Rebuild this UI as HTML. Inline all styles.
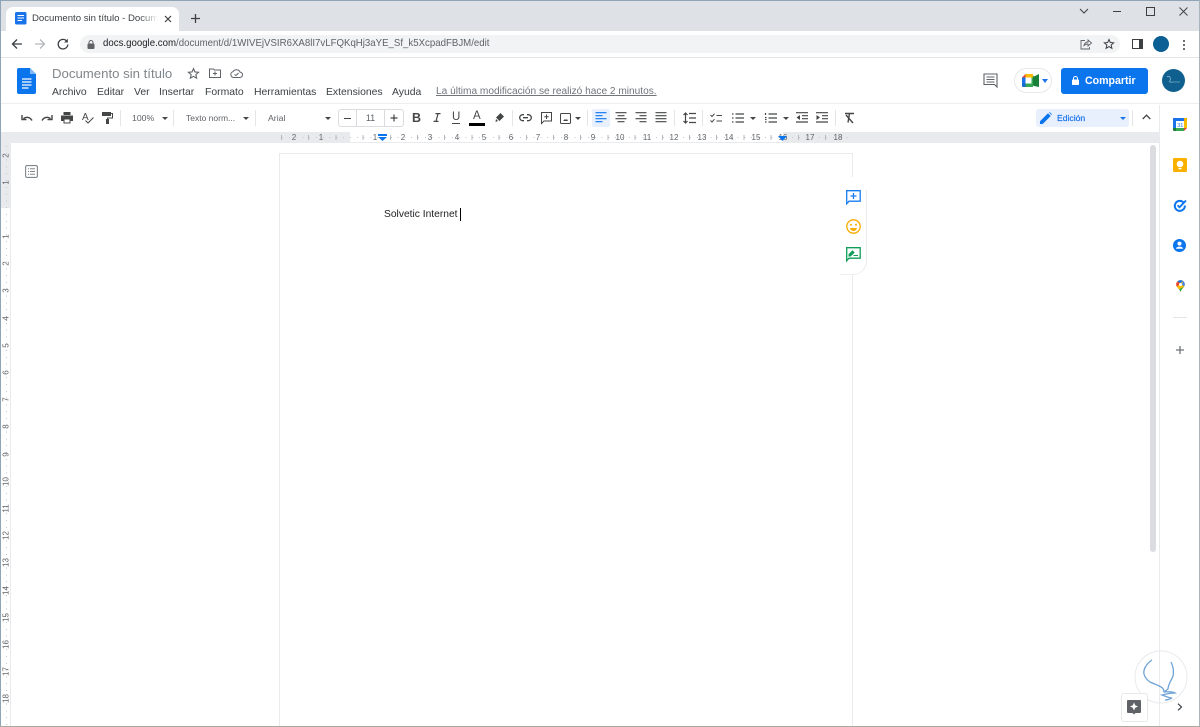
<!DOCTYPE html>
<html lang="es"><head><meta charset="utf-8"><title>Documento sin título - Documentos de Google</title>
<style>
html,body{margin:0;padding:0;width:1200px;height:727px;overflow:hidden;background:#fff;font-family:"Liberation Sans",sans-serif;color:#3c4043}
.a{position:absolute}
.t{position:absolute;white-space:nowrap;line-height:14px}
svg{position:absolute;overflow:visible}
.m{position:absolute;top:86px;font-size:10.4px;line-height:14px;color:#3c4043;white-space:nowrap}
.tb{position:absolute;top:112px;font-size:8.7px;line-height:12px;color:#5f6368;white-space:nowrap}
.sep{position:absolute;top:110px;width:1px;height:16px;background:#e3e5e8}
.r{position:absolute;top:133px;font-size:8px;line-height:9px;color:#5f6368;width:14px;text-align:center}
.v{position:absolute;left:-1px;font-size:8px;line-height:9px;height:9px;width:14px;text-align:center;color:#5f6368;transform:rotate(-90deg)}
.dots{position:absolute;top:137px;left:282px;width:568px;height:1px;background:repeating-linear-gradient(90deg,#c4c7cb 0 1px,transparent 1px 6.8px)}
.ticks{position:absolute;top:135px;left:280.6px;width:570px;height:5px;background:repeating-linear-gradient(90deg,#b5b9bd 0 1px,transparent 1px 27.2px)}
.vd{position:absolute;left:6px;top:146px;width:1px;height:581px;background:repeating-linear-gradient(180deg,#c4c7cb 0 1px,transparent 1px 6.8px)}
</style></head><body>

<!-- tab strip -->
<div class="a" style="left:0;top:0;width:1200px;height:31px;background:#dee1e6"></div>
<div class="a" style="left:6px;top:7px;width:173px;height:24px;background:#fff;border-radius:7px 7px 0 0"></div>
<svg style="left:15px;top:12px" width="12" height="13" viewBox="0 0 12 13"><rect width="11.5" height="12.5" rx="1.5" fill="#1a73e8"/><path d="M2.5 3.5h6.5M2.5 6h6.5M2.5 8.5h4.5" stroke="#fff" stroke-width="1.1"/></svg>
<div class="t" style="left:32px;top:12px;font-size:9.6px;color:#3c4043;width:126px;overflow:hidden">Documento sin título - Documen</div>
<div class="a" style="left:140px;top:12px;width:18px;height:14px;background:linear-gradient(90deg,rgba(255,255,255,0),#fff)"></div>
<svg style="left:164px;top:15px" width="8" height="8" viewBox="0 0 8 8"><path d="M1 1l6 6M7 1L1 7" stroke="#3c4043" stroke-width="1.2"/></svg>
<svg style="left:191px;top:14px" width="9" height="9" viewBox="0 0 9 9"><path d="M4.500 0v9M0 4.500h9" stroke="#3c4043" stroke-width="1.300"/></svg>
<svg style="left:1079px;top:8px" width="10" height="6" viewBox="0 0 10 6"><path d="M1 1l4 4 4-4" stroke="#3c4043" fill="none"/></svg>
<div class="a" style="left:1113px;top:10.500px;width:8px;height:1px;background:#3c4043"></div>
<div class="a" style="left:1146px;top:7px;width:7px;height:7px;border:1px solid #3c4043"></div>
<svg style="left:1179px;top:7px" width="9" height="9" viewBox="0 0 9 9"><path d="M.5.5l8 8M8.500.5l-8 8" stroke="#3c4043" stroke-width=".9"/></svg>

<!-- address bar -->
<div class="a" style="left:0;top:31px;width:1200px;height:27px;background:#fff;border-bottom:1px solid #e3e5e8;box-sizing:border-box"></div>
<svg style="left:11px;top:38px" width="12" height="12" viewBox="0 0 12 12"><path d="M11 6H1.500M6 1.500L1.500 6 6 10.500" stroke="#3c4043" stroke-width="1.300" fill="none"/></svg>
<svg style="left:34px;top:38px" width="12" height="12" viewBox="0 0 12 12"><path d="M1 6h9.500M6 1.500L10.500 6 6 10.500" stroke="#b4b7bb" stroke-width="1.300" fill="none"/></svg>
<svg style="left:57px;top:38px" width="12" height="12" viewBox="0 0 12 12"><path d="M10 3.500A4.800 4.800 0 1 0 10.800 6.500" stroke="#3c4043" stroke-width="1.300" fill="none"/><path d="M10.800 .8v3.700H7.100z" fill="#3c4043"/></svg>
<div class="a" style="left:80px;top:35px;width:1040px;height:18px;border-radius:9px;background:#f1f3f4"></div>
<svg style="left:87px;top:40px" width="8" height="9" viewBox="0 0 8 9"><path d="M2 4V2.500a2 2 0 0 1 4 0V4" stroke="#5f6368" fill="none"/><rect x=".5" y="3.500" width="7" height="5.500" rx="1" fill="#5f6368"/></svg>
<div class="t" style="left:103px;top:37px;font-size:9.66px;color:#5f6368"><span style="color:#202124">docs.google.com</span>/document/d/1WIVEjVSIR6XA8lI7vLFQKqHj3aYE_Sf_k5XcpadFBJM/edit</div>
<svg style="left:1080px;top:38px" width="12" height="12" viewBox="0 0 12 12"><path d="M4 7.500C4.500 5 6 4 8 4V2l3.500 3L8 8V6C6.500 6 5 6.500 4 7.500zM5 2.500H1v8.500h8.500V9" stroke="#5f6368" fill="none" stroke-width=".9"/></svg>
<svg style="left:1103px;top:38px" width="12" height="12" viewBox="0 0 24 24"><path d="M12 3l2.700 6.100 6.600.6-5 4.400 1.500 6.500L12 17.200 6.200 20.600l1.500-6.500-5-4.400 6.600-.6z" stroke="#3c4043" stroke-width="2" fill="none"/></svg>
<div class="a" style="left:1132px;top:39px;width:11px;height:10px;border:1.500px solid #3c4043;border-right-width:4px;box-sizing:border-box"></div>
<div class="a" style="left:1153px;top:36px;width:16px;height:16px;border-radius:50%;background:#0b5f94"></div>
<div class="a" style="left:1183px;top:40px;width:2px;height:2px;background:#3c4043;box-shadow:0 4px #3c4043,0 8px #3c4043;border-radius:50%"></div>

<!-- docs header -->
<svg style="left:17px;top:68px" width="19" height="26" viewBox="0 0 19 26"><path d="M2 0h11L19 6v18a2 2 0 0 1-2 2H2a2 2 0 0 1-2-2V2a2 2 0 0 1 2-2z" fill="#0b75ee"/><path d="M13 0l6 6h-6z" fill="#7db8f7"/><path d="M5 11h9.500M5 14h9.500M5 17h9.500M5 20h6.500" stroke="#fff" stroke-width="1.300"/></svg>
<div class="t" style="left:52px;top:66px;font-size:13.2px;line-height:15px;color:#80868b">Documento sin título</div>
<svg style="left:187px;top:67px" width="13" height="13" viewBox="0 0 24 24"><path d="M12 3l2.700 6.100 6.600.6-5 4.400 1.500 6.500L12 17.200 6.200 20.600l1.500-6.500-5-4.400 6.600-.6z" stroke="#5f6368" stroke-width="2" fill="none"/></svg>
<svg style="left:209px;top:68px" width="12" height="10" viewBox="0 0 12 10"><path d="M.5 1h4l1 1h6v7.500H.5zM6 3.500v4M4 5.500h4" stroke="#5f6368" fill="none"/></svg>
<svg style="left:230px;top:68px" width="13" height="10" viewBox="0 0 13 10"><path d="M3.500 9.500a3 3 0 0 1-.4-5.900 4 4 0 0 1 7 .5 2.700 2.700 0 0 1-.6 5.400zM4.500 6.500l1.500 1 2.500-2.500" stroke="#5f6368" fill="none"/></svg>

<div class="m" style="left:52px">Archivo</div>
<div class="m" style="left:97px">Editar</div>
<div class="m" style="left:134px">Ver</div>
<div class="m" style="left:159px">Insertar</div>
<div class="m" style="left:205px">Formato</div>
<div class="m" style="left:254px">Herramientas</div>
<div class="m" style="left:326px">Extensiones</div>
<div class="m" style="left:392px">Ayuda</div>
<div class="m" style="left:436px;top:85px;font-size:10.15px;color:#70757a;text-decoration:underline">La última modificación se realizó hace 2 minutos.</div>

<svg style="left:983px;top:73px" width="15" height="15" viewBox="0 0 15 15"><path d="M1 1h13v13l-2.500-2.500H1zM3.500 4h8M3.500 6.500h8M3.500 9h8" stroke="#5f6368" fill="none" stroke-width="1.100"/></svg>
<div class="a" style="left:1014px;top:68px;width:38px;height:25px;border:1px solid #e6e8ea;border-radius:13px;box-sizing:border-box"></div>
<svg style="left:1022px;top:74px" width="17" height="13" viewBox="0 0 17 13"><path d="M3.500 0H11v3.500H3.500z" fill="#fbbc04"/><path d="M0 3.500L3.500 0v3.500z" fill="#ea4335"/><path d="M0 3.500h3.500v6H0z" fill="#1a73e8"/><path d="M3.500 9.500H11V13H3.500z" fill="#34a853"/><path d="M0 9.500h3.500V13H1a1 1 0 0 1-1-1z" fill="#1967d2"/><path d="M11 1.500v10l1 .5 5 1V0l-5 2.500z" fill="#188038"/><path d="M11 3.500v6H9.500v-6z" fill="#34a853"/></svg>
<svg style="left:1042px;top:79px" width="6" height="4" viewBox="0 0 6 4"><path d="M0 0h6L3 4z" fill="#1a73e8"/></svg>
<div class="a" style="left:1061px;top:68px;width:87px;height:26px;background:#0b75ee;border-radius:3px"></div>
<svg style="left:1072px;top:76px" width="7" height="9" viewBox="0 0 7 9"><path d="M1.500 4V2.500a2 2 0 0 1 4 0V4" stroke="#fff" fill="none"/><rect y="3.500" width="7" height="5.500" rx=".8" fill="#fff"/></svg>
<div class="t" style="left:1085px;top:74px;font-size:10.6px;font-weight:bold;color:#fff">Compartir</div>
<div class="a" style="left:1162px;top:69px;width:23px;height:23px;border-radius:50%;background:#10608f"></div>
<svg style="left:1164px;top:75px" width="18" height="11" viewBox="0 0 18 11"><path d="M3 2c2-2 4 0 3 4M5 6c1 2 3 1 4 1h7" stroke="#a9cbe0" fill="none" stroke-width=".6"/></svg>

<!-- toolbar -->
<div class="a" style="left:0;top:103px;width:1200px;height:1px;background:#eceef0"></div>
<svg style="left:21px;top:114px" width="12" height="7" viewBox="0 0 12 7"><path d="M11 6.500C9 3 5 2.500 2.500 4.500M1 1v4.500h4.500" stroke="#444746" stroke-width="1.400" fill="none"/></svg>
<svg style="left:41px;top:114px" width="12" height="7" viewBox="0 0 12 7"><path d="M1 6.500C3 3 7 2.500 9.500 4.500M11 1v4.500H6.500" stroke="#444746" stroke-width="1.400" fill="none"/></svg>
<svg style="left:61px;top:112px" width="12" height="12" viewBox="0 0 12 12"><path d="M2.500 0h7v3h-7zM0 3.500h12V9H9.500v2.500h-7V9H0z" fill="#444746"/><path d="M3.500 7.500h5v3h-5z" fill="#fff"/></svg>
<div class="t" style="left:82px;top:111px;font-size:10px;color:#444746">A</div>
<svg style="left:85px;top:117px" width="9" height="7" viewBox="0 0 9 7"><path d="M.5 3.500L3 6 8.500.5" stroke="#444746" fill="none"/></svg>
<svg style="left:102px;top:112px" width="11" height="12" viewBox="0 0 11 12"><path d="M0 0h9v4H0zM4 7h3v5H4z" fill="#444746"/><path d="M9 1.500h1.500v4.500H5.500V7" stroke="#444746" fill="none"/></svg>
<div class="sep" style="left:120px"></div>
<div class="tb" style="left:132px">100%</div>
<svg style="left:162px;top:117px" width="6" height="3" viewBox="0 0 6 3"><path d="M0 0h6L3 3z" fill="#444746"/></svg>
<div class="sep" style="left:173px"></div>
<div class="tb" style="left:186px;font-size:8.5px">Texto norm...</div>
<svg style="left:243px;top:117px" width="6" height="3" viewBox="0 0 6 3"><path d="M0 0h6L3 3z" fill="#444746"/></svg>
<div class="sep" style="left:255px"></div>
<div class="tb" style="left:268px">Arial</div>
<svg style="left:325px;top:117px" width="6" height="3" viewBox="0 0 6 3"><path d="M0 0h6L3 3z" fill="#444746"/></svg>
<div class="a" style="left:338px;top:109px;width:66px;height:18px;border:1px solid #dadce0;border-radius:3px;box-sizing:border-box"></div>
<div class="a" style="left:356px;top:109px;width:1px;height:18px;background:#dadce0"></div>
<div class="a" style="left:384px;top:109px;width:1px;height:18px;background:#dadce0"></div>
<div class="a" style="left:344px;top:117.500px;width:7px;height:1.200px;background:#444746"></div>
<div class="tb" style="left:357px;width:27px;text-align:center;font-size:9px">11</div>
<svg style="left:390px;top:114px" width="8" height="8" viewBox="0 0 8 8"><path d="M4 .5v7M.5 4h7" stroke="#444746" stroke-width="1.200"/></svg>

<div class="t" style="left:412px;top:111px;font-size:12.5px;font-weight:bold;color:#444746">B</div>
<svg style="left:433px;top:113px" width="8" height="9" viewBox="0 0 8 9"><path d="M2.500.6h5M.5 8.400h5M5 .6L3 8.400" stroke="#444746" stroke-width="1.200" fill="none"/></svg>
<div class="t" style="left:452px;top:111px;font-size:11.500px;line-height:12px;color:#444746">U</div>
<div class="a" style="left:452px;top:123px;width:8px;height:1px;background:#444746"></div>
<div class="t" style="left:473px;top:110px;font-size:11.500px;line-height:12px;color:#444746">A</div>
<div class="a" style="left:469px;top:123px;width:16px;height:3px;background:#000"></div>
<svg style="left:494px;top:112px" width="11" height="11" viewBox="0 0 11 11"><path d="M6.500 1L10 4.500 5.500 9 2 5.500zM2 7l2 2-2.500 1z" fill="#444746"/></svg>
<div class="sep" style="left:512px"></div>
<svg style="left:519px;top:114px" width="13" height="8" viewBox="0 0 13 8"><path d="M5 .7H3.700a3 3 0 0 0 0 6H5M8 .7h1.300a3 3 0 0 1 0 6H8M4 3.700h5" stroke="#444746" stroke-width="1.300" fill="none"/></svg>
<svg style="left:541px;top:112px" width="11" height="12" viewBox="0 0 11 12"><path d="M.5.500h10v8.500H3L.5 11.500zM5.500 2.500v4.500M3.300 4.700h4.400" stroke="#444746" fill="none"/></svg>
<svg style="left:560px;top:113px" width="11" height="11" viewBox="0 0 11 11"><rect x=".5" y=".5" width="10" height="10" rx="1" stroke="#444746" fill="none"/><path d="M3 8l2-2 1 1 1-1 1 2z" fill="#444746"/></svg>
<svg style="left:575px;top:117px" width="6" height="3" viewBox="0 0 6 3"><path d="M0 0h6L3 3z" fill="#444746"/></svg>
<div class="sep" style="left:587px"></div>
<div class="a" style="left:592px;top:109px;width:18px;height:18px;background:#e8f0fe;border-radius:2px"></div>
<svg style="left:595px;top:112px" width="12" height="11" viewBox="0 0 12 11"><path d="M.5.700h11M.5 3.700h7M.5 6.700h11M.5 9.700h7" stroke="#0b75ee" stroke-width="1.200"/></svg>
<svg style="left:615px;top:112px" width="12" height="11" viewBox="0 0 12 11"><path d="M.5.700h11M2.500 3.700h7M.5 6.700h11M2.500 9.700h7" stroke="#444746" stroke-width="1.200"/></svg>
<svg style="left:635px;top:112px" width="12" height="11" viewBox="0 0 12 11"><path d="M.5.700h11M4.500 3.700h7M.5 6.700h11M4.500 9.700h7" stroke="#444746" stroke-width="1.200"/></svg>
<svg style="left:655px;top:112px" width="12" height="11" viewBox="0 0 12 11"><path d="M.5.700h11M.5 3.700h11M.5 6.700h11M.5 9.700h11" stroke="#444746" stroke-width="1.200"/></svg>
<div class="sep" style="left:674px"></div>
<svg style="left:683px;top:112px" width="13" height="12" viewBox="0 0 13 12"><path d="M2.500 1v10M.5 3l2-2 2 2M.5 9l2 2 2-2M6 1.500h7M6 6h7M6 10.500h7" stroke="#444746" stroke-width="1.200" fill="none"/></svg>
<div class="sep" style="left:702px"></div>
<svg style="left:710px;top:113px" width="12" height="10" viewBox="0 0 12 10"><path d="M.5 2l1.500 1.500L4.500.7M.5 7.500L2 9l2.500-2.800M6.500 2.500H12M6.500 8H12" stroke="#444746" fill="none"/></svg>
<svg style="left:732px;top:113px" width="12" height="10" viewBox="0 0 12 10"><path d="M0 1h1.500M0 5h1.500M0 9h1.500M3.500 1H12M3.500 5H12M3.500 9H12" stroke="#444746" stroke-width="1.300"/></svg>
<svg style="left:750px;top:117px" width="6" height="3" viewBox="0 0 6 3"><path d="M0 0h6L3 3z" fill="#444746"/></svg>
<svg style="left:765px;top:113px" width="12" height="10" viewBox="0 0 12 10"><path d="M.5 0v2M0 4.500h1.500M0 6.500l1.500 0M0 9h1.500M3.500 1H12M3.500 5H12M3.500 9H12" stroke="#444746" stroke-width="1.200"/></svg>
<svg style="left:783px;top:117px" width="6" height="3" viewBox="0 0 6 3"><path d="M0 0h6L3 3z" fill="#444746"/></svg>
<svg style="left:796px;top:112px" width="12" height="11" viewBox="0 0 12 11"><path d="M0 .7h12M6 3.700h6M6 6.700h6M0 10h12" stroke="#444746" stroke-width="1.200"/><path d="M4 3v5L.5 5.500z" fill="#444746"/></svg>
<svg style="left:816px;top:112px" width="12" height="11" viewBox="0 0 12 11"><path d="M0 .7h12M6 3.700h6M6 6.700h6M0 10h12" stroke="#444746" stroke-width="1.200"/><path d="M.5 3v5L4 5.500z" fill="#444746"/></svg>
<div class="sep" style="left:835px"></div>
<svg style="left:844px;top:112px" width="11" height="12" viewBox="0 0 11 12"><path d="M1 1.500h9M5.500 1.500L4 10.500M2 3l7 8" stroke="#444746" stroke-width="1.400" fill="none"/></svg>

<div class="a" style="left:1036px;top:109px;width:93px;height:18px;background:#e8f0fe;border-radius:3px"></div>
<svg style="left:1040px;top:112px" width="12" height="12" viewBox="0 0 12 12"><path d="M0 12V9.300L8 1.300l2.700 2.700-8 8zM9 .4l.6-.4 2.400 2.400-.6.600z" fill="#0b75ee"/></svg>
<div class="t" style="left:1057px;top:111px;font-size:8.6px;color:#1a73e8;-webkit-text-stroke:.2px #1a73e8">Edición</div>
<svg style="left:1120px;top:116.500px" width="6" height="3" viewBox="0 0 6 3"><path d="M0 0h6L3 3z" fill="#1a73e8"/></svg>
<div class="sep" style="left:1132px"></div>
<svg style="left:1142px;top:114px" width="9" height="6" viewBox="0 0 9 6"><path d="M.7 5l3.800-3.800L8.300 5" stroke="#444746" stroke-width="1.300" fill="none"/></svg>

<!-- horizontal ruler -->
<div class="a" style="left:0;top:132px;width:1159px;height:11px;background:#e8eaed"></div>
<div class="a" style="left:350px;top:132px;width:433px;height:10px;background:#fff"></div>
<div class="dots"></div>
<div class="ticks"></div>
<span class="r" style="left:287px">2</span><span class="r" style="left:314px">1</span>
<span class="r" style="left:368px">1</span><span class="r" style="left:396px">2</span><span class="r" style="left:423px">3</span><span class="r" style="left:450px">4</span><span class="r" style="left:477px">5</span><span class="r" style="left:504px">6</span><span class="r" style="left:531px">7</span><span class="r" style="left:559px">8</span><span class="r" style="left:586px">9</span><span class="r" style="left:613px">10</span><span class="r" style="left:640px">11</span><span class="r" style="left:667px">12</span><span class="r" style="left:695px">13</span><span class="r" style="left:722px">14</span><span class="r" style="left:749px">15</span><span class="r" style="left:776px">16</span><span class="r" style="left:803px">17</span><span class="r" style="left:831px">18</span>
<svg style="left:378px;top:134px" width="9" height="7" viewBox="0 0 9 7"><path d="M0 0h9v2H0z" fill="#0b75ee"/><path d="M0 3h9L4.500 7z" fill="#0b75ee"/></svg>
<svg style="left:778px;top:135px" width="9" height="6" viewBox="0 0 9 6"><path d="M0 1h9L4.500 6z" fill="#0b75ee"/></svg>

<!-- vertical ruler -->
<div class="a" style="left:1px;top:143px;width:10px;height:65px;background:#e8eaed"></div>
<div class="a" style="left:10px;top:143px;width:1px;height:584px;background:#e8eaed"></div>
<div class="vd"></div>
<span class="v" style="top:151px">2</span><span class="v" style="top:178px">1</span>
<span class="v" style="top:232px">1</span><span class="v" style="top:259px">2</span><span class="v" style="top:286px">3</span><span class="v" style="top:314px">4</span><span class="v" style="top:341px">5</span><span class="v" style="top:368px">6</span><span class="v" style="top:395px">7</span><span class="v" style="top:422px">8</span><span class="v" style="top:450px">9</span><span class="v" style="top:477px">10</span><span class="v" style="top:504px">11</span><span class="v" style="top:531px">12</span><span class="v" style="top:558px">13</span><span class="v" style="top:586px">14</span><span class="v" style="top:613px">15</span><span class="v" style="top:640px">16</span><span class="v" style="top:667px">17</span><span class="v" style="top:694px">18</span>

<!-- outline icon -->
<svg style="left:25px;top:165px" width="13" height="13" viewBox="0 0 13 13"><rect x=".6" y=".6" width="11.800" height="11.800" rx="1.500" stroke="#80868b" stroke-width="1.100" fill="none"/><path d="M3 3.800h1M5 3.800h5M3 6.500h1M5 6.500h5M3 9.200h1M5 9.200h5" stroke="#80868b"/></svg>

<!-- page -->
<div class="a" style="left:279px;top:153px;width:574px;height:574px;background:#fff;border:1px solid #e8eaed;border-bottom:0;box-sizing:border-box"></div>
<div class="t" style="left:384px;top:208px;font-size:10.25px;color:#202124">Solvetic Internet</div>
<div class="a" style="left:459.500px;top:208px;width:1px;height:13px;background:#000"></div>

<!-- floating side menu -->
<div class="a" style="left:840px;top:177px;width:27px;height:14px;background:#fff"></div>
<div class="a" style="left:840px;top:190px;width:27px;height:85px;background:#fff;border-right:1px solid #e8eaed;border-bottom:1px solid #eceef0;border-radius:0 0 14px 0;box-sizing:border-box"></div>
<svg style="left:846px;top:190px" width="15" height="15" viewBox="0 0 15 15"><path d="M.7.700h13.500v10.500H3L.7 13.800zM7.500 3v6M4.500 6h6" stroke="#1a7df0" stroke-width="1.300" fill="none"/></svg>
<svg style="left:846px;top:219px" width="15" height="15" viewBox="0 0 15 15"><circle cx="7.500" cy="7.500" r="6.700" stroke="#f9ab00" stroke-width="1.300" fill="none"/><circle cx="5" cy="5.800" r="1" fill="#f9ab00"/><circle cx="10" cy="5.800" r="1" fill="#f9ab00"/><path d="M4 9h7c-.5 2-2 3-3.500 3S4.500 11 4 9z" fill="#f9ab00"/></svg>
<svg style="left:846px;top:247px" width="15" height="15" viewBox="0 0 15 15"><path d="M.7.700h13.500v10.500H3L.7 13.800z" stroke="#0f9d58" stroke-width="1.300" fill="none"/><path d="M3 9V7.500L6.500 4 8 5.500 4.500 9zM7.500 8.500H12" stroke="#0f9d58" fill="#0f9d58"/></svg>

<!-- scrollbar -->
<div class="a" style="left:1150px;top:145px;width:6px;height:407px;background:#dadce0;border-radius:3px"></div>

<!-- side panel -->
<div class="a" style="left:1159px;top:105px;width:1px;height:622px;background:#e8eaed"></div>
<svg style="left:1173px;top:118px" width="14" height="13" viewBox="0 0 14 13"><path d="M0 0h14v13H0z" fill="#fff"/><path d="M0 0h11v3H3v7H0z" fill="#1a73e8"/><path d="M11 0h3v3h-3z" fill="#f9ab00"/><path d="M11 3h3v7h-3z" fill="#fbbc04"/><path d="M3 10h8v3H3z" fill="#34a853"/><path d="M0 10h3v3H1a1 1 0 0 1-1-1z" fill="#188038"/><path d="M11 10h3l-3 3z" fill="#ea4335"/><text x="4.200" y="8.800" font-size="5.500" font-family="Liberation Sans" fill="#1a73e8">31</text></svg>
<svg style="left:1173px;top:158px" width="14" height="14" viewBox="0 0 14 14"><rect width="14" height="14" rx="1.500" fill="#fbb000"/><circle cx="7" cy="6" r="3.300" fill="#fff"/><rect x="5.500" y="10" width="3" height="1.300" fill="#fff"/></svg>
<svg style="left:1173px;top:199px" width="14" height="13" viewBox="0 0 14 13"><path d="M10.500 3.500A5 5 0 1 0 11.800 6.500" stroke="#0b75ee" stroke-width="2" fill="none"/><path d="M4.500 6.300L6.500 8.300 13 1.500" stroke="#0b75ee" stroke-width="1.800" fill="none"/></svg>
<svg style="left:1173px;top:239px" width="13" height="13" viewBox="0 0 14 14"><circle cx="7" cy="7" r="7" fill="#0b75ee"/><circle cx="7" cy="5" r="2.200" fill="#fff"/><path d="M3 10.500c.5-1.800 2.500-2.300 4-2.300s3.500.5 4 2.300z" fill="#fff"/></svg>
<svg style="left:1175.500px;top:280px" width="9" height="12" viewBox="0 0 10 13"><path d="M5 0a4.800 4.800 0 0 1 4.800 4.800C9.800 8 6.300 9.500 5 13 3.700 9.500.2 8 .2 4.800A4.800 4.800 0 0 1 5 0z" fill="#fbbc04"/><path d="M1.500 1.500A4.800 4.800 0 0 0 .2 4.800c0 1 .4 1.800 .9 2.500L5 3.300z" fill="#ea4335"/><path d="M1.500 1.500A4.800 4.800 0 0 1 8 1L5 3.300z" fill="#1a73e8"/><path d="M8 1a4.800 4.800 0 0 1 1.800 3.800c0 1-.4 1.700-.9 2.400L6.500 4.500z" fill="#4285f4"/><path d="M8.900 7.200C7.600 9 5.800 10.500 5 13c-.4-1-1-1.900-1.600-2.700z" fill="#34a853"/><circle cx="5" cy="4.800" r="1.700" fill="#fff"/></svg>
<div class="a" style="left:1173px;top:317px;width:14px;height:1px;background:#e3e5e8"></div>
<svg style="left:1176px;top:346px" width="8" height="8" viewBox="0 0 8 8"><path d="M4 0v8M0 4h8" stroke="#70757a" stroke-width="1.300"/></svg>
<svg style="left:1177px;top:703px" width="6" height="8" viewBox="0 0 6 8"><path d="M1 .7L4.500 4 1 7.300" stroke="#3c4043" stroke-width="1.200" fill="none"/></svg>

<!-- watermark -->
<svg style="left:1080px;top:640px" width="120" height="87" viewBox="0 0 120 87"><circle cx="81" cy="37" r="26" stroke="#e8eaed" fill="none"/><path d="M72 20C66 24 63 30 64 34c1 4 3 6 6 8 4 2 8 3 11 5 2 1 3 3 3 5 3 0 8-1 11 1-4 0-9 1-13 2 3 1 7 3 10 3-2 1-5 2-7 2M84 52c1-1 3-2 4-3 0-4 3-8 5-13 1-5 0-10-2-14" stroke="#6fa3d6" stroke-width="1.300" fill="none"/></svg>

<!-- explore button -->
<div class="a" style="left:1121px;top:693px;width:27px;height:29px;background:#fff;border:1px solid #e6e8ea;border-radius:3px;box-sizing:border-box"></div>
<svg style="left:1127px;top:700px" width="14" height="15" viewBox="0 0 14 15"><path d="M1 0h12a1 1 0 0 1 1 1v11a1 1 0 0 1-1 1H8.500L7 14.500 5.500 13H1a1 1 0 0 1-1-1V1a1 1 0 0 1 1-1z" fill="#5f6368"/><path d="M7 2.500l1.200 2.800L11 6.500 8.200 7.700 7 10.500 5.800 7.700 3 6.500l2.800-1.200z" fill="#fff"/></svg>

<!-- window edge -->
<div class="a" style="left:0;top:0;width:1200px;height:1px;background:#8fa5b5"></div>
<div class="a" style="left:0;top:0;width:1px;height:727px;background:#8fa5b5"></div>
<div class="a" style="left:1199px;top:0;width:1px;height:727px;background:#a9b4bc"></div>
<div class="a" style="left:0;top:726px;width:1200px;height:1px;background:#a9a9a0"></div>
</body></html>
